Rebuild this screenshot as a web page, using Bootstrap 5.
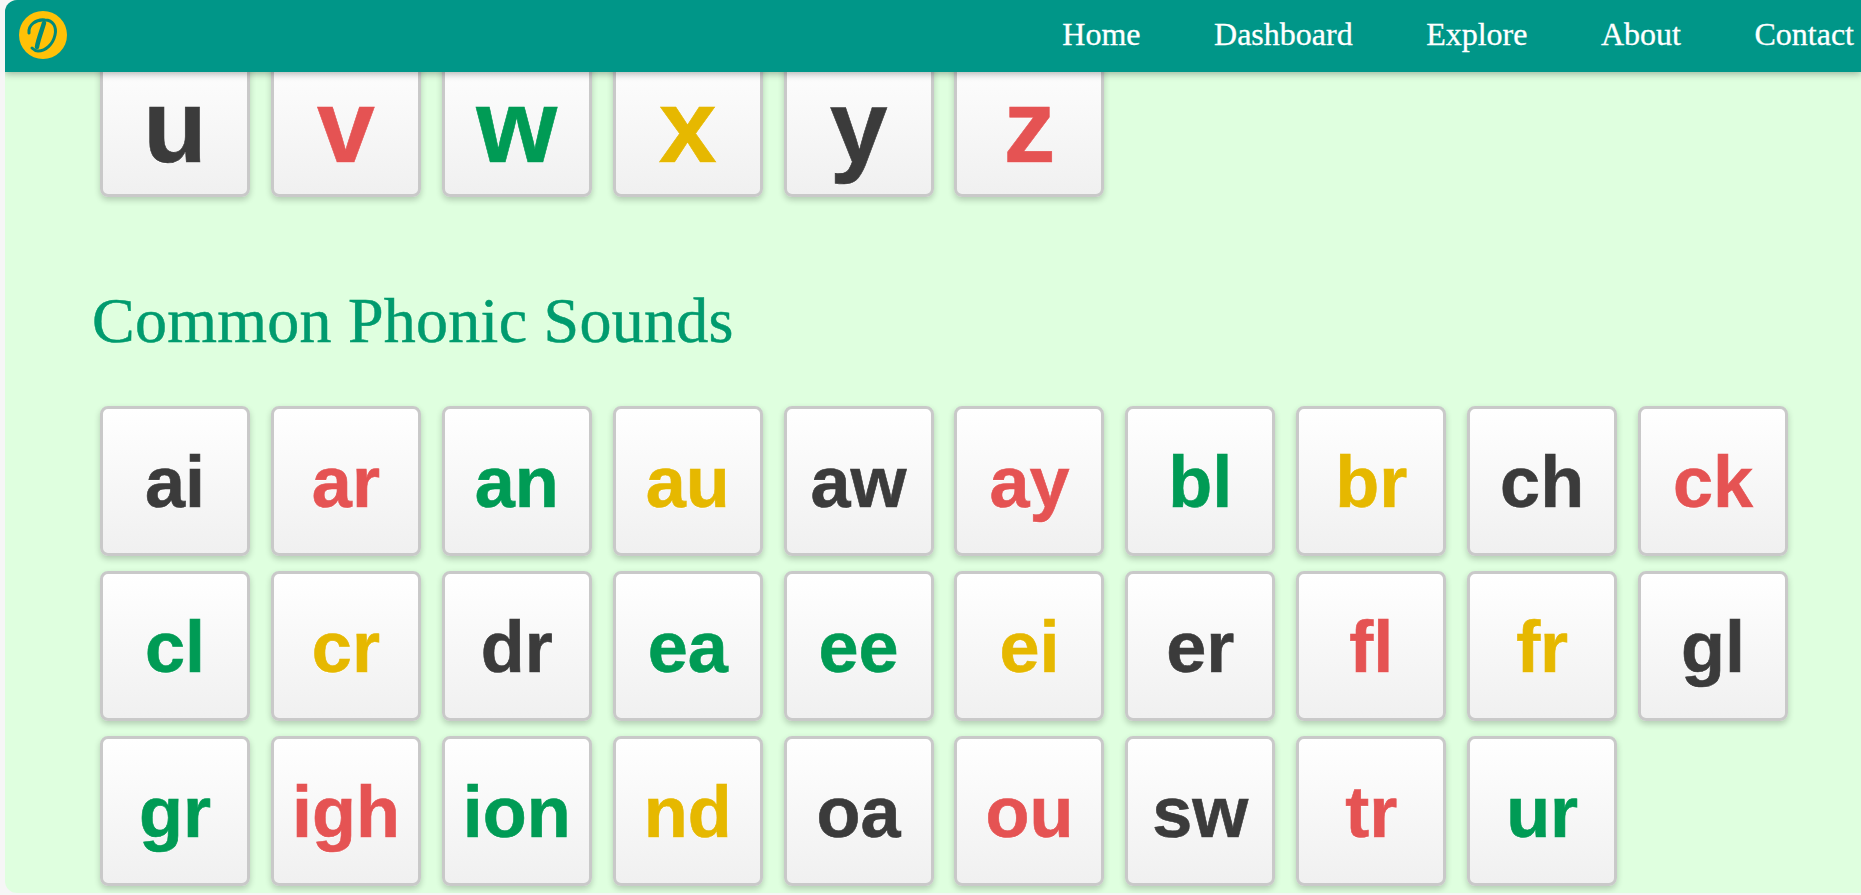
<!DOCTYPE html>
<html lang="en">
<head>
    <meta charset="UTF-8">
    <meta name="viewport" content="width=device-width, initial-scale=1.0">
    <title>Common Phonic Sounds</title>
    <link rel="stylesheet" href="https://cdn.jsdelivr.net/npm/bootstrap@5.3.0/dist/css/bootstrap.min.css">
    <style>
        body {
            background: #f6f6f6;
            height: 100vh;
            overflow: hidden;
            margin: 0;
        }
        .app-shell {
            position: relative;
            margin-left: 5px;
            height: 893px;
            background: #dfffdf;
            border-radius: 12px 0 0 12px;
            overflow: hidden;
        }
        .top-bar {
            height: 72px;
            padding: 0;
            background: #009688;
            box-shadow: 0 2px 7px rgba(0, 0, 0, 0.3);
        }
        .top-bar .navbar-brand {
            padding: 0;
            margin: 0 0 2px 13px;
            line-height: 0;
        }
        .top-bar .nav-link {
            font-family: "Liberation Serif", serif;
            font-size: 32px;
            line-height: 48px;
            -webkit-text-stroke: 0.3px #fff;
            color: #fff;
            padding: 0 0 5px;
        }
        .top-bar .navbar-nav {
            gap: 73.5px;
            margin-right: 7px;
        }
        .logo-d {
            fill: none;
            stroke: #00897b;
            stroke-linecap: round;
        }
        .sheet {
            padding: 47px 0 0 95px;
        }
        .tile-grid {
            display: grid;
            grid-template-columns: repeat(10, 150px);
            column-gap: 20.9px;
            row-gap: 15px;
        }
        .tile {
            height: 150px;
            display: flex;
            align-items: center;
            justify-content: center;
            padding-top: 2px;
            border: 3px solid #c9c9c9;
            border-radius: 8px;
            background: linear-gradient(#fff, #f0f0f0);
            box-shadow: 0 3px 6px rgba(0, 0, 0, 0.2);
            font-family: "Liberation Sans", Arial, sans-serif;
            font-weight: bold;
            font-size: 72px;
            line-height: 1;
            -webkit-text-stroke: 0.6px currentColor;
            text-shadow: 0 1px 0 #fff;
        }
        .tile-big {
            font-size: 104px;
            padding-top: 8px;
        }
        .tone-dark { color: #3b3b3b; }
        .tone-red { color: #e55353; }
        .tone-green { color: #009b55; }
        .tone-gold { color: #e6b800; }
        .sheet-title {
            font-family: "Liberation Serif", serif;
            font-size: 64px;
            font-weight: 400;
            line-height: 64px;
            letter-spacing: 0.25px;
            -webkit-text-stroke: 0.5px #009b6e;
            color: #009b6e;
            margin: 92px 0 53px -8px;
        }
    </style>
</head>
<body>

    <div class="app-shell">
        <nav class="navbar top-bar position-absolute top-0 start-0 end-0 z-3">
            <a class="navbar-brand" href="#">
                <svg width="50" height="50" viewBox="0 0 50 50">
                    <circle cx="25" cy="25" r="24" fill="#ffc107"/>
                    <path class="logo-d" stroke-width="3" d="M11 23 C10 15 18 9 27 10 C35 10 39 17 37 25 C35 34 28 41 20 41 C17 41 15 39 14 38"/>
                    <path class="logo-d" stroke-width="4.5" d="M26 13 C24 20 20 30 19 37"/>
                </svg>
            </a>
            <ul class="navbar-nav flex-row">
                <li class="nav-item"><a class="nav-link" href="#">Home</a></li>
                <li class="nav-item"><a class="nav-link" href="#">Dashboard</a></li>
                <li class="nav-item"><a class="nav-link" href="#">Explore</a></li>
                <li class="nav-item"><a class="nav-link" href="#">About</a></li>
                <li class="nav-item"><a class="nav-link" href="#">Contact</a></li>
            </ul>
        </nav>

        <main class="sheet">
            <div class="tile-grid">
                <div class="tile tile-big tone-dark">u</div>
                <div class="tile tile-big tone-red">v</div>
                <div class="tile tile-big tone-green">w</div>
                <div class="tile tile-big tone-gold">x</div>
                <div class="tile tile-big tone-dark">y</div>
                <div class="tile tile-big tone-red">z</div>
            </div>

            <h2 class="sheet-title">Common Phonic Sounds</h2>

            <div class="tile-grid">
                <div class="tile tone-dark">ai</div>
                <div class="tile tone-red">ar</div>
                <div class="tile tone-green">an</div>
                <div class="tile tone-gold">au</div>
                <div class="tile tone-dark">aw</div>
                <div class="tile tone-red">ay</div>
                <div class="tile tone-green">bl</div>
                <div class="tile tone-gold">br</div>
                <div class="tile tone-dark">ch</div>
                <div class="tile tone-red">ck</div>
                <div class="tile tone-green">cl</div>
                <div class="tile tone-gold">cr</div>
                <div class="tile tone-dark">dr</div>
                <div class="tile tone-green">ea</div>
                <div class="tile tone-green">ee</div>
                <div class="tile tone-gold">ei</div>
                <div class="tile tone-dark">er</div>
                <div class="tile tone-red">fl</div>
                <div class="tile tone-gold">fr</div>
                <div class="tile tone-dark">gl</div>
                <div class="tile tone-green">gr</div>
                <div class="tile tone-red">igh</div>
                <div class="tile tone-green">ion</div>
                <div class="tile tone-gold">nd</div>
                <div class="tile tone-dark">oa</div>
                <div class="tile tone-red">ou</div>
                <div class="tile tone-dark">sw</div>
                <div class="tile tone-red">tr</div>
                <div class="tile tone-green">ur</div>
            </div>
        </main>
    </div>

    <script src="https://cdn.jsdelivr.net/npm/bootstrap@5.3.0/dist/js/bootstrap.bundle.min.js"></script>
</body>
</html>
